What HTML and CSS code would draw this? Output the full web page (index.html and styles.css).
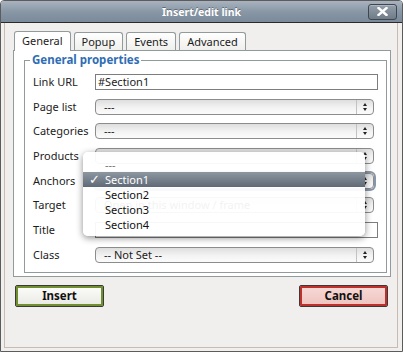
FILE: index.html
```html
<!DOCTYPE html>
<html lang="en">
<head>
    <meta charset="UTF-8">
    <title>Insert/edit link</title>
    <link rel="stylesheet" href="styles.css">
</head>
<body>
    <div class="window">
        <div class="titlebar">
            <span class="title">Insert/edit link</span>
            <span class="close">
                <svg width="11" height="9" viewBox="0 0 11 9"><path d="M1.5 1 L9.5 8 M9.5 1 L1.5 8" stroke="#fff" stroke-width="2.4" stroke-linecap="square"/></svg>
            </span>
        </div>
        <div class="frame">
            <div class="tabs">
                <span class="tab active">General</span>
                <span class="tab">Popup</span>
                <span class="tab">Events</span>
                <span class="tab">Advanced</span>
            </div>
            <div class="panel">
                <fieldset>
                    <legend>General properties</legend>
                    <div class="form">
                        <label>Link URL</label>
                        <div class="input">#Section1</div>
                        <label>Page list</label>
                        <div class="select"><span class="value">---</span><span class="arrows"></span></div>
                        <label>Categories</label>
                        <div class="select"><span class="value">---</span><span class="arrows"></span></div>
                        <label>Products</label>
                        <div class="select"><span class="value covered">---</span><span class="arrows"></span></div>
                        <label>Anchors</label>
                        <div class="select focus"><span class="value covered">Section1</span><span class="arrows"></span></div>
                        <label>Target</label>
                        <div class="select"><span class="value">Open in this window / frame</span><span class="arrows"></span></div>
                        <label>Title</label>
                        <div class="input"></div>
                        <label>Class</label>
                        <div class="select"><span class="value">-- Not Set --</span><span class="arrows"></span></div>
                    </div>
                </fieldset>
            </div>
            <div class="buttons">
                <button class="btn insert">Insert</button>
                <button class="btn cancel">Cancel</button>
            </div>
        </div>
        <ul class="menu">
            <li class="disabled">---</li>
            <li class="selected"><span class="check">&#10003;</span>Section1</li>
            <li>Section2</li>
            <li>Section3</li>
            <li>Section4</li>
        </ul>
    </div>
</body>
</html>
```

FILE: styles.css
```css
body {
    margin: 0;
    font-family: "Noto Sans", "DejaVu Sans", sans-serif;
    font-size: 11px;
    color: #1c1c1c;
}
.window {
    position: relative;
    width: 403px;
    height: 352px;
    box-sizing: border-box;
    border: 1px solid #5c5c5c;
    border-radius: 4px 4px 0 0;
    background: #f0efed;
    display: flex;
    flex-direction: column;
    overflow: hidden;
}
.titlebar {
    height: 21px;
    border-bottom: 1px solid #2a2a2a;
    background: linear-gradient(#a8b3be, #8997a6 50%, #7a8a9a);
    display: grid;
    grid-template-columns: 1fr auto 1fr;
    align-items: center;
}
.title {
    grid-column: 2;
    color: #fff;
    font-weight: bold;
    font-size: 10.5px;
    text-shadow: 0 -1px 0 rgba(0, 0, 0, 0.35);
}
.close {
    grid-column: 3;
    justify-self: end;
    margin-right: 5px;
    width: 29px;
    height: 16px;
    box-sizing: border-box;
    border: 1px solid #3e4650;
    border-radius: 3px;
    background: linear-gradient(#939ea9, #6f7b87);
    box-shadow: inset 0 1px 0 rgba(255, 255, 255, 0.25);
    display: flex;
    align-items: center;
    justify-content: center;
}
.frame {
    flex: 1;
    margin: 0 4px 3px 3px;
    border: 1px solid #c8bcb2;
    border-top: none;
    display: flex;
    flex-direction: column;
}
.tabs {
    display: flex;
    align-items: flex-end;
    gap: 3px;
    height: 19px;
    margin: 8px 0 0 9px;
    position: relative;
    z-index: 1;
}
.tab {
    height: 18px;
    box-sizing: border-box;
    padding: 0 7px;
    border: 1px solid #919b9c;
    border-bottom: none;
    border-radius: 3px 3px 0 0;
    background: linear-gradient(#ffffff, #efefec);
    line-height: 17px;
}
.tab.active {
    height: 20px;
    margin-bottom: -1px;
    background: #fff;
    line-height: 18px;
}
.panel {
    margin: 0 6px 0 8px;
    border: 1px solid #919b9c;
    background: #fff;
}
fieldset {
    margin: 2px 3px 3px 10px;
    padding: 7px 8px 0 8px;
    border: 1px solid #919b9c;
}
legend {
    margin-left: -3px;
    padding: 0 2px;
    line-height: 14px;
    font-size: 11.5px;
    font-weight: bold;
    color: #2f6db4;
}
.form {
    display: grid;
    grid-template-columns: 62px 1fr;
    grid-auto-rows: 24.7px;
    align-items: start;
}
.form label {
    line-height: 16px;
}
.input {
    height: 16px;
    box-sizing: border-box;
    border: 1px solid #7d7d7d;
    padding-left: 2px;
    line-height: 14px;
}
.select {
    width: calc(100% - 4px);
    height: 16px;
    box-sizing: border-box;
    border: 1px solid #8c8c8c;
    border-radius: 4px;
    background: linear-gradient(#dedede, #f3f3f3 55%, #fbfbfb);
    display: flex;
    line-height: 14px;
}
.select.focus {
    box-shadow: 0 0 0 2px #8797aa;
}
.value {
    flex: 1;
    padding-left: 8px;
    white-space: nowrap;
    overflow: hidden;
}
.value.covered {
    visibility: hidden;
}
.arrows {
    width: 16px;
    border-left: 1px solid #c2c2c2;
    display: flex;
    flex-direction: column;
    align-items: center;
    justify-content: center;
    gap: 2px;
}
.arrows::before,
.arrows::after {
    content: "";
    border-left: 2.5px solid transparent;
    border-right: 2.5px solid transparent;
}
.arrows::before {
    border-bottom: 3px solid #222;
}
.arrows::after {
    border-top: 3px solid #222;
}
.buttons {
    display: flex;
    justify-content: space-between;
    margin: 8px 9px 0 10px;
}
.btn {
    width: 89px;
    height: 22px;
    box-sizing: border-box;
    border: 1px solid #3a3a3a;
    border-radius: 2px;
    font-family: "Noto Sans", "DejaVu Sans", sans-serif;
    font-size: 11.5px;
    font-weight: bold;
    color: #111;
    padding: 0;
}
.insert {
    background: linear-gradient(#fdfdfb, #e8e8e3);
    box-shadow: inset 0 0 0 2px #728f30;
}
.cancel {
    background: linear-gradient(#f7d9d6, #eec3bf);
    box-shadow: inset 0 0 0 2px #bf302b;
}
.menu {
    position: absolute;
    left: 82px;
    top: 151px;
    width: 282px;
    height: 84px;
    box-sizing: border-box;
    margin: 0;
    padding: 5px 0 0 0;
    list-style: none;
    border-radius: 5px;
    background: rgba(255, 255, 255, 0.94);
    box-shadow: 0 2px 7px rgba(0, 0, 0, 0.45);
}
.menu li {
    position: relative;
    height: 15px;
    line-height: 15px;
    padding-left: 22px;
    font-size: 11px;
    color: #111;
}
.menu li.disabled {
    color: #777;
}
.menu li.selected {
    background: linear-gradient(#8d97a2, #5f6a76);
    color: #fff;
}
.check {
    position: absolute;
    left: 6px;
    top: 0;
    font-family: "DejaVu Sans", sans-serif;
    font-size: 13px;
    font-weight: bold;
}
```
